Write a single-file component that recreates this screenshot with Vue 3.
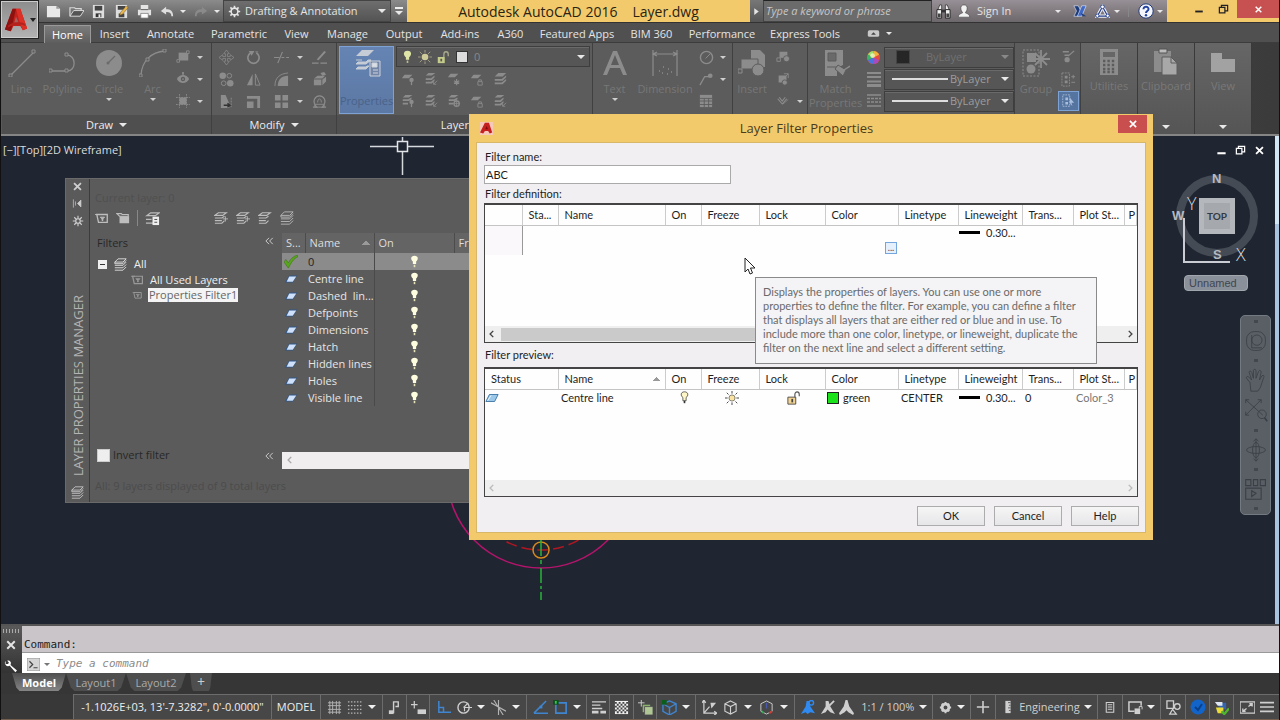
<script setup>
import { h, ref } from 'vue'

const g = 'fill="none" stroke="currentColor"'
const glyphs = {
  newFile: '<path d="M1 2h10l4 3v9H1z" fill="#e8e8e8"/><path d="M11 2v3h4z" fill="#999"/>',
  open: '<path d="M1 13V4h5l1 1h6v2" fill="none" stroke="#d8d8d8" stroke-width="1.3"/><path d="M1 13 5 7h11l-4 6z" fill="#555" stroke="#ddd"/>',
  save: '<path d="M2 1h12v14H2z" fill="#ddd"/><path d="M4 2h8v5H4z" fill="#444"/><path d="M5 10h6v4H5z" fill="#333"/><path d="M8 11h2v3H8z" fill="#eee"/>',
  saveAs: '<path d="M2 1h12v14H2z" fill="#ddd"/><path d="M4 2h8v4H4zM5 10h6v4H5z" fill="#444"/><path d="m6 12 1-3 6-7 2 2-6 7z" fill="#e8b64a" stroke="#6b5020" stroke-width=".5"/>',
  print: '<path d="M4 1h8v5H4zM1 6h14v6H1z" fill="#e4e4e4"/><path d="M4 6h8" stroke="#555"/><path d="M4 10h8v5H4z" fill="#fff" stroke="#777" stroke-width=".8"/>',
  undo: '<path d="M7 3 1 8l6 4V9c4 0 6 1 6 5h2c0-6-3-8-8-8z" fill="#dedede"/>',
  redo: '<path d="m9 3 6 5-6 4V9c-4 0-6 1-6 5H1c0-6 3-8 8-8z" fill="#8a8a8a"/>',
  gear: '<circle cx="8" cy="8" r="4.2" fill="none" stroke="currentColor" stroke-width="2"/><path d="M8 1v3M8 12v3M1 8h3M12 8h3M3 3l2 2M11 11l2 2M13 3l-2 2M5 11l-2 2" stroke="currentColor" stroke-width="2"/>',
  gearSolid: '<circle cx="8" cy="8" r="3.6" fill="none" stroke="currentColor" stroke-width="3"/><path d="M8 2v3M8 11v3M2 8h3M11 8h3M4 4l2 2M10 10l2 2M12 4l-2 2M6 10l-2 2" stroke="currentColor" stroke-width="2"/>',
  binoc: '<path d="M2 6 4 1h2v5M14 6l-2-5h-2v5" fill="#eee" stroke="#222" stroke-width=".7"/><path d="M1 6h5v9H1zM10 6h5v9h-5z" fill="#f2f2f2" stroke="#222"/><path d="M6 6h4v3H6z" fill="#333"/><path d="M2 10h3v4H2zM11 10h3v4h-3z" fill="#444"/>',
  user: '<path d="M8 1c3 0 4 2 3.500 5C11 8 10 9 9.500 10c1 1 5 1 5 5h-13c0-4 4-4 5-5C6 9 5 8 4.500 6 4 3 5 1 8 1z" fill="#f2f2f2" stroke="#333" stroke-width=".6"/>',
  exch: '<path d="M1 2h5l3 6-3 6H1l3-6z" fill="#1d3a7a" stroke="#e8eefc" stroke-width=".7"/><path d="M15 2h-5L5 14h5z" fill="#3f69c4" stroke="#e8eefc" stroke-width=".7"/><path d="M15 14h-4l-2-4z" fill="#1d3a7a"/>',
  a360: '<path d="M8 3 2.500 13h11z" fill="none" stroke="#f2f4fa" stroke-width="3.500"/><path d="M8 3 2.500 13h11z" fill="none" stroke="#27408b" stroke-width="1.300"/><circle cx="8" cy="3" r="2" fill="#fff" stroke="#27408b"/><circle cx="2.500" cy="12.500" r="1.800" fill="#fff" stroke="#27408b"/><circle cx="13.500" cy="12.500" r="1.800" fill="#fff" stroke="#27408b"/>',
  help: '<circle cx="8" cy="8" r="7.200" fill="#f4f6fc" stroke="#223a78"/><path d="M5.500 6.200c0-3.400 5.200-3.200 5 0C10.400 8 8 8 8 10" fill="none" stroke="#2343a0" stroke-width="2"/><circle cx="8" cy="12.300" r="1.200" fill="#2343a0"/>',
  tabIcon: '<rect x="1" y="4" width="14" height="8" rx="2" fill="#c8c8c8"/><path d="m5 9.500 3-3 3 3z" fill="#444"/>',
  logo: '<path d="M10 1h9l8 23-5 2-3-5h-8l-3 6-7-2z" fill="#c1211b"/><path d="M10 1h4L8 27l-7-2z" fill="#8d1210"/><path d="m14 10 3 7h-5z" fill="#a5605c"/><path d="M14 1h5l8 23-5 2-4-10z" fill="#dc2f26"/><path d="M5 20c7-4 14-4 19-2l1 3c-7-3-13-2-21 2z" fill="#b3231d"/>',
  logoSmall: '<path d="M0 0h16v16H0z" fill="#f6c9bb"/><path d="M6 1h5l4 12-3 1-2-3H6l-2 3-4-1z" fill="#c5201f"/><path d="m8 5 2 4H6.500z" fill="#7d0c0c"/>',

  line: `<path d="M3 26 26 3" ${g} stroke-width="1.300"/><path d="M1 25h3v3H1zM24 1h3v3h-3z" fill="#5c5c5c" stroke="currentColor"/>`,
  pline: `<path d="M2 22h16c10 0 9-16 0-16" ${g} stroke-width="1.300"/><path d="M0 20h3v3H0zM16 20h3v3h-3zM16 4h3v3h-3z" fill="#5c5c5c" stroke="currentColor"/>`,
  circle: '<circle cx="14" cy="14" r="13" fill="currentColor"/><path d="m13 14 7-7" stroke="#6b6b6b" stroke-width="1.200"/><circle cx="13" cy="14" r="1.500" fill="#6b6b6b"/>',
  arc: `<path d="M2 26C3 12 12 3 26 2" ${g} stroke-width="1.300"/><path d="M0 25h3v3H0zM7 9h3v3H7zM24 0h3v3h-3z" fill="#5c5c5c" stroke="currentColor"/>`,
  rect: '<path d="M3 3h11v9H3z" fill="currentColor"/><path d="M1 11h3v3H1zM12 1h3v3h-3z" fill="#5c5c5c" stroke="currentColor"/>',
  ellipse: '<path d="M1 8c3-6 11-6 14 0-3 6-11 6-14 0z" fill="currentColor"/><circle cx="8" cy="8" r="2.500" fill="#5c5c5c"/><circle cx="8" cy="8" r="1" fill="currentColor"/><path d="M7 0h2v3H7z" fill="currentColor"/>',
  hatch: `<path d="M4 4h8v8H4z" fill="currentColor"/><path d="M4 0v16M12 0v16M0 4h16M0 12h16" ${g} stroke-dasharray="2 1"/>`,
  move: '<path d="M8 0 5 4h2v3H4V5L0 8l4 3V9h3v3H5l3 4 3-4H9V9h3v2l4-3-4-3v2H9V4h2z" fill="#5c5c5c" stroke="currentColor" stroke-width=".8"/>',
  rotate: `<path d="M5 3a6 6 0 1 0 6 0" ${g} stroke-width="1.800"/><path d="m3 1 6 0-3 5z" fill="currentColor"/><path d="M10 2h3" ${g}/>`,
  trim: `<path d="M0 8h6M8 8h3M13 8h3" ${g} stroke-width="1.300"/><path d="m4 14 5-12" ${g} stroke-width="1.200"/>`,
  erase: `<path d="M0 14h7M9 14h7" ${g} stroke-width="1.400"/><path d="m5 10 8-9 2 1-8 9z" fill="currentColor"/>`,
  copy: '<circle cx="4" cy="4" r="3.500" fill="currentColor"/><circle cx="12" cy="12" r="3.500" fill="currentColor"/><circle cx="11" cy="4" r="2.500" fill="none" stroke="currentColor"/><circle cx="5" cy="12" r="2.500" fill="none" stroke="currentColor"/>',
  mirror: `<path d="M7 2v12H1z" fill="currentColor"/><path d="M10 2v12h5z" ${g}/>`,
  fillet: `<path d="M4 15C4 8 8 4 15 4v11z" fill="currentColor"/><path d="M1 15C1 6 6 2 15 1" ${g}/>`,
  explode: '<path d="m2 7 4-3h8l-3 3zM2 8h8v6H2zM11 8l4-3v5l-4 4z" fill="currentColor"/><path d="m9 1 4-1 2 3-4 1z" fill="currentColor"/>',
  stretch: '<path d="M2 1h5l4 9v5H2z" fill="currentColor"/><path d="M5 12h7m-3-2 3 2-3 2" fill="none" stroke="#333" stroke-width="1.400"/><path d="M13 4v10" stroke="currentColor" stroke-dasharray="2 1"/>',
  scale: `<path d="M1 8h7v7H1z" fill="currentColor"/><path d="M1 2h14v13h-3V5H1z" fill="currentColor"/>`,
  array: '<path d="M1 1h6v6H1zM9 1h6v6H9zM1 9h6v6H1zM9 9h6v6H9z" fill="currentColor"/>',
  offset: `<path d="M1 14h4c-6-7-1-12 3-12s9 5 3 12h4" ${g} stroke-width="1.300"/><path d="M3 11h10v3H3z" ${g}/><path d="M6 9c0-5 4-5 4 0" ${g}/>`,
  layerProps: '<path d="m9 1 12 0-6 6H3z" fill="#c6ccd6"/><path d="m3 11 6 0M3 15h10l5-4h-3l-2 2H5zM3 20h10l3-3h-2l-1 1H5z" fill="#c6ccd6" stroke="#c6ccd6"/><path d="M17 12h10v15H17z" fill="#7386a8" stroke="#ccd2dc"/><path d="M19 14h5v4h-5zM20 21h5M20 24h5" fill="#d9dde4" stroke="#ccd2dc"/>',
  bulb: '<path d="M8 1c6 0 5 6 2 8v3H6V9C3 7 2 1 8 1z" fill="#dfe5a6"/><path d="M7 13h2v3H7z" fill="#b9b98d"/>',
  sun: '<circle cx="8" cy="8" r="3.800" fill="#cfcb9a"/><path d="M8 0v3M8 13v3M0 8h3M13 8h3M2 2l2.500 2.500M11.500 11.500 14 14M14 2l-2.500 2.500M4.500 11.500 2 14" stroke="#aaa68a"/>',
  lock: '<path d="M2 8h8v7H2z" fill="#c5cb8a"/><path d="M9 8V5c0-4 5-4 5 0v2" fill="none" stroke="#aaa98c" stroke-width="1.500"/><path d="M5 10h2v3H5z" fill="#555"/>',
  lay1: '<path d="M4 3h9l-4 4H1z" fill="currentColor"/><circle cx="12" cy="9" r="2.500" fill="currentColor"/><path d="M12 11v4" stroke="currentColor" stroke-width="1.500"/>',
  lay2: '<path d="M5 1h8l-4 3H2zM2 7h6l4-3v2L9 9H2zM2 11h6l4-3v2l-3 3H2z" fill="currentColor"/><path d="m15 10-4 4m0-3v3h3" fill="none" stroke="currentColor"/>',
  lay3: '<path d="M4 2h9L9 6H1z" fill="currentColor"/><path d="M11 8v7M8 10l6 3M14 10l-6 3" stroke="currentColor" stroke-width="1.300"/>',
  lay4: '<path d="M4 3h9L9 7H1z" fill="currentColor"/><path d="M9 11h5v4H9zM10 11V9h3v2" fill="none" stroke="currentColor"/>',
  lay5: '<path d="M6 1h9l-4 4H2zM2 8h8l5-4v2l-4 4H2zM2 12h8l5-4v2l-4 4H2z" fill="currentColor"/>',
  lay6: '<path d="M5 1h8l-4 3H2zM2 6h6l4-2v2L9 8H2zM2 10h5v2H2z" fill="currentColor"/><circle cx="11" cy="11" r="3" fill="none" stroke="currentColor" stroke-width="1.500"/><path d="M11 7v8M7 11h8" stroke="currentColor"/>',
  lay7: '<path d="M5 1h8l-4 3H2zM2 6h6l4-2v2L9 8H2zM2 10h6v2H2z" fill="currentColor"/><circle cx="12" cy="9" r="2.500" fill="currentColor"/><path d="M12 11v4" stroke="currentColor" stroke-width="1.500"/>',
  textA: '<path d="M12 2h4l10 24h-4l-3-7H9l-3 7H2zm2 4-4 10h8z" fill="currentColor"/>',
  dim: `<path d="M2 1v26M26 1v26M2 5h24M6 3 2 5l4 2M22 3l4 2-4 2" ${g} stroke-width="1.200"/><path d="M8 22h1M12 18h1M17 20h1M20 23h1M11 24h1M16 25h1" stroke="currentColor" stroke-width="1.500"/>`,
  dimSmall: `<circle cx="8" cy="8" r="6.500" ${g} stroke-width="1.500"/><path d="m7 9 5-5" ${g}/>`,
  leader: `<path d="m1 14 5-9h5" ${g} stroke-width="1.300"/><circle cx="12" cy="4" r="2.500" fill="currentColor"/>`,
  table: '<path d="M1 1h14v14H1z" fill="currentColor"/><path d="M1 5h14M1 8h14M1 12h14M6 5v10M11 5v10" stroke="#5c5c5c"/>',
  insert: '<path d="M13 1h9l5 5v12H13z" fill="currentColor"/><path d="M3 10h17v10H3z" fill="currentColor" stroke="#5c5c5c"/><circle cx="20" cy="21" r="6" fill="currentColor" stroke="#5c5c5c"/><path d="M0 20h4v4H0z" fill="#5c5c5c" stroke="currentColor"/>',
  block1: '<path d="M4 2h9v7H4z" fill="currentColor"/><circle cx="12" cy="10" r="3.500" fill="currentColor" stroke="#5c5c5c"/><path d="M1 9h4v4H1z" fill="none" stroke="currentColor"/>',
  block2: '<path d="M3 4h9v8H3z" fill="currentColor"/><path d="m9 7 5-5m0 5V2H9" fill="none" stroke="currentColor"/><circle cx="10" cy="12" r="3" fill="currentColor" stroke="#5c5c5c"/>',
  block3: `<path d="m1 5 6 7 6-7M3 3l4 5 4-5" ${g} stroke-width="1.500"/><path d="m8 12 7-6" ${g}/>`,
  match: '<path d="M3 1h18v15l-6 3v8H3z" fill="currentColor"/><path d="M6 4h8v8H6zM5 18h11" fill="#6a6a6a" stroke="#5c5c5c"/><path d="m13 20 3-4 8 5-3 6z" fill="currentColor" stroke="#5c5c5c"/><path d="m22 21 6-4" stroke="currentColor" stroke-width="1.500"/>',
  wheel: '<circle cx="8" cy="8" r="7" fill="#e34b3f"/><path d="M8 8V1a7 7 0 0 1 6 4z" fill="#efb53a"/><path d="M8 8 2 5a7 7 0 0 1 6-4z" fill="#9be06a"/><path d="M8 8 2 5a7 7 0 0 0 0 6z" fill="#38b765"/><path d="m8 8-6 3a7 7 0 0 0 6 4z" fill="#4a75dc"/><path d="M8 8v7a7 7 0 0 0 6-4z" fill="#a64bc0"/><circle cx="7" cy="6" r="2.500" fill="#f6f2c8" opacity=".8"/>',
  weights: '<path d="M1 2h14M1 6h14M1 10.500h14" stroke="currentColor" stroke-width="2"/><path d="M1 14.500h14" stroke="currentColor" stroke-width="3"/>',
  types: '<path d="M1 2h14M1 13h14" stroke="currentColor" stroke-width="1.500"/><path d="M1 5.500h14M1 9h14" stroke="currentColor" stroke-width="1.500" stroke-dasharray="3 1"/>',
  group: `<path d="M1 1h16v26H1z" ${g} stroke-dasharray="2 1.500"/><path d="M5 4h9v9H5z" fill="currentColor"/><circle cx="9" cy="20" r="4.500" fill="currentColor"/><path d="M19 1v18M10 10h18M13 4l12 12M25 4 13 16" stroke="currentColor" stroke-width="1.800"/>`,
  grp1: '<path d="M2 2h7M4 6h5" stroke="currentColor" stroke-width="1.500"/><circle cx="7" cy="11" r="3" fill="currentColor"/><path d="m8 7 7-6" stroke="currentColor" stroke-width="1.500"/>',
  grp2: `<path d="M1 1h8v14H1z" ${g} stroke-dasharray="2 1"/><path d="M4 4h3v3H4zM4 9h3v3H4z" fill="currentColor"/><path d="M11 5h4M13 3v4M11 11h4" ${g}/>`,
  grp3: '<path d="M2 1h8v13H2z" fill="none" stroke="#a9bedd" stroke-dasharray="2 1"/><path d="M5 4h3v3H5zM5 9h3v3H5z" fill="#a9bedd"/><path d="m10 4 5 6h-3l1 4-3-4z" fill="#a9bedd"/>',
  calc: '<path d="M5 1h18v26H5z" fill="currentColor"/><path d="M8 4h12v5H8z" fill="#666"/><path d="M8 13h12M8 17h12M8 21h12M8 24h12" stroke="#5c5c5c" stroke-width="2.500" stroke-dasharray="2.400 2"/>',
  clip: '<path d="M2 3h17v21H2z" fill="currentColor"/><path d="M7 1h8v4H7z" fill="#bbb" stroke="#555"/><path d="M10 9h9l6 6v12H10z" fill="#a8a8a8" stroke="#5c5c5c"/><path d="M19 9v6h6" fill="none" stroke="#5c5c5c"/>',
  view: '<path d="M2 5h11v6h13v13H2z" fill="#a2a2a2"/>',

  pin: '<path d="M2 2v12M5 5v6M8 8l5-5v10z" fill="currentColor" stroke="currentColor"/>',
  pCog: '<circle cx="8" cy="8" r="3" fill="none" stroke="currentColor" stroke-width="1.500"/><path d="M8 1v4M8 11v4M1 8h4M11 8h4M3 3l3 3M10 10l3 3M13 3l-3 3M6 10l-3 3" stroke="currentColor" stroke-width="1.500"/>',
  stack: '<path d="M5 1h10l-4 4H1zM1 5v2h10l4-4M1 9h10l4-4M1 12h10l4-4M1 15h10l4-4" fill="none" stroke="currentColor"/>',
  folderF: '<path d="M2 4h12v9H4z" fill="none" stroke="currentColor" stroke-width="1.500"/><path d="M0 4h5M6 7h5l-2 2v2h-1v-2z" fill="currentColor" stroke="currentColor"/>',
  folder: '<path d="M1 3h5l1 1h7v2H4z" fill="none" stroke="currentColor" stroke-width="1.300"/><path d="M4 6h11v8H4z" fill="currentColor"/>',
  stateMgr: '<path d="M6 2h9l-4 3H2zM1 9h6M1 13h8" fill="none" stroke="currentColor" stroke-width="1.300"/><path d="M8 6h7v9H8z" fill="#eee"/><path d="M10 9h3M10 12h3" stroke="#444"/>',
  newLay: '<path d="M5 2h9l-4 3H1zM1 8h8l3-2M1 11h8M1 14h8l3-3" fill="none" stroke="currentColor" stroke-width="1.300"/><path d="M13 6v6M10 9h6" stroke="currentColor"/>',
  delLay: '<path d="M5 2h9l-4 3H1zM1 8h8l3-2M1 11h8M1 14h8l3-3" fill="none" stroke="currentColor" stroke-width="1.300"/>',
  para: '<path d="M6 4h9l-5 8H1z" fill="#2f5688"/><path d="M6 5h8l-4 6H3z" fill="#cfe0fa"/>',
  paraBlue: '<path d="M5 4h10l-4 8H1z" fill="#9cc8ea" stroke="#39709f"/><path d="m7 5-4 6" stroke="#fff"/>',
  lamp: '<path d="M8 1c5 0 5 5 2 7v3H6V8C3 6 3 1 8 1z" fill="#fffde0"/><path d="M7 12h2v3H7z" fill="#e6e3b8"/>',
  check: '<path d="m0 8 5 7C8 9 11 4 16 2l-1-2C10 2 7 5 5 9L2 5z" fill="#57a61c" stroke="#37700f" stroke-width=".6"/>',
  dLamp: '<path d="M8 1c5 0 5 5 2 7v4H6V8C3 6 3 1 8 1z" fill="#fff6c8" stroke="#333" stroke-width=".9"/><path d="M7 12h2v3H7z" fill="#333"/>',
  dSun: '<circle cx="8" cy="8" r="3.500" fill="#fbe3a2" stroke="#555" stroke-width=".8"/><path d="M8 0v3M8 13v3M0 8h3M13 8h3M2 2l2 2M12 12l2 2M14 2l-2 2M4 12l-2 2" stroke="#444" stroke-width="1.100"/>',
  dLock: '<path d="M1 7h9v8H1z" fill="#f4d495" stroke="#444"/><path d="M9 7V4c0-4 5-4 5 0v2" fill="none" stroke="#555" stroke-width="1.300"/><path d="M5 9h2v4H5z" fill="#444"/>',

  navWheel: `<rect x="3" y="3" width="22" height="22" rx="9" ${g}/><circle cx="15" cy="13" r="6" ${g}/><path d="M9 7v15h12" ${g}/>`,
  hand: `<path d="M7 17 3 12c-1-2 2-3 3-1l3 3-3-9c0-2 2-2 3 0l2 7V3c0-2 3-2 3 0v9l3-8c1-2 3-1 3 1l-2 9 3-5c2-1 3 0 2 2l-4 12-3 4h-8z" ${g}/>`,
  zoomX: `<path d="m2 2 20 18M20 2 2 20M2 6V2h4M16 2h4v4M2 16v4h4" ${g}/><circle cx="21" cy="19" r="5" ${g}/><path d="m24 23 3 4" ${g} stroke-width="2"/>`,
  orbit: `<path d="M14 1v26M11 4l3-3 3 3M11 24l3 3 3-3" ${g}/><ellipse cx="14" cy="14" rx="11" ry="4" ${g}/><ellipse cx="14" cy="14" rx="4" ry="9" ${g}/>`,
  motion: `<path d="M2 3h6v7H2zM11 3h5v7h-5zM19 3h6v7h-6zM2 13h18v13H2zM9 16l5 3-5 4z" ${g} stroke-width="1.300"/>`,
  wrench: '<path d="M2 1a4 4 0 0 0 5 6l7 8 2-2-8-7c2-4-2-6-4-5l2 2-1 2-3 0z" fill="#fff"/>',
  prompt: '<path d="M0 0h16v16H0z" fill="#d5d5d5" stroke="#888"/><path d="m3 4 4 4-4 4M8 12h5" fill="none" stroke="#444" stroke-width="1.500"/>',

  grid: '<path d="M3 1v14M6 1v14M10 1v14M13 1v14M1 3h14M1 6h14M1 10h14M1 13h14" stroke="currentColor" opacity=".8"/>',
  dots: '<path d="M1 2h15M1 6h15M1 10h15M1 14h15" stroke="currentColor" stroke-width="1.300" stroke-dasharray="1.600 1.600" opacity=".8"/>',
  infer: `<path d="M7 14V2h5v5H9" ${g} stroke-width="1.500"/><path d="M2 11h5v4H2z" fill="currentColor"/>`,
  dyn: '<path d="M0 5h7M3.500 1v8" stroke="currentColor" stroke-width="1.300"/><path d="M7 10h9v5H7z" fill="currentColor"/>',
  ortho: '<path d="M3 1v12h13M3 8h5v5" fill="none" stroke="#3f85d0" stroke-width="1.600"/>',
  polar: `<circle cx="7" cy="8" r="6" ${g} stroke-width="1.500"/><path d="M7 8h9M7 8l5-5M7 8h1v4" ${g} stroke-width="1.200"/>`,
  iso: `<path d="M3 0 13 16M8 0v16M0 3l16 9" ${g} stroke-width="1.200" opacity=".8"/>`,
  otrack: '<path d="M1 14h15M1 14 14 1" fill="none" stroke="#3f85d0" stroke-width="1.600"/><path d="M7 6h3v3H7z" fill="#3f85d0"/>',
  osnap: '<path d="M3 3h11v11H3z" fill="none" stroke="#3f85d0" stroke-width="1.800"/><path d="M0 0h6v5H0z" fill="#0c4f1c"/><path d="M2 1h2v3H2z" fill="#3bc24b"/>',
  lwt: '<path d="M1 2h15M1 5.500h9M1 9h11" stroke="currentColor" stroke-width="1.500"/><path d="M1 13h7M10 13h6" stroke="currentColor" stroke-width="3"/>',
  transp: '<path d="M1 1h14v14H1z" fill="#f0f0f0"/><path d="M1 3h14M1 7h14M1 11h14M3 5h12M3 9h12M3 13h12" stroke="#444" stroke-width="2" stroke-dasharray="2 2"/>',
  selCyc: '<path d="M0 3h7M3.500 0v7" stroke="currentColor"/><path d="M5 5h8v8H5z" fill="#8ab36d"/><path d="M7 7h9v9H7z" fill="#b0c795" stroke="#555"/>',
  cube3: '<path d="m8 1 7 3v8l-7 4-7-4V4zM1 4l7 4 7-4M8 8v8" fill="none" stroke="#3f85d0" stroke-width="1.500"/><path d="M0 0h5v5H0z" fill="#0c5c1c"/>',
  ducs: `<path d="M2 1v13h13M2 14 8 7M0 3l2-3 2 3M13 12l3 2-3 2" ${g} stroke-width="1.300"/><path d="M9 3h6l-5 6z" fill="currentColor"/>`,
  cube: `<path d="m8 1 6 3v8l-6 3-6-3V4zM2 4l6 3 6-3M8 7v8" ${g} stroke-width="1.200"/>`,
  gizmo: `<path d="m8 1 6 3v8l-6 3-6-3V4z" ${g}/><path d="M8 3v6" stroke="#4a58b0" stroke-width="1.500"/><path d="m3 12 2 2" stroke="#3aa75a" stroke-width="2"/><path d="m11 14 3-2" stroke="#d43a32" stroke-width="2"/>`,
  annoBlue: '<path d="M7 1h3l1 6 5 7-5-1-3 2-2-2-5 2 5-8z" fill="#2f8af2"/><circle cx="12" cy="3" r="2.500" fill="none" stroke="#2f8af2" stroke-width="1.500"/>',
  anno: '<path d="M6 1h3l2 6 5 8-5-2-3-3-2 3-5 2 5-8z" fill="currentColor"/><path d="m10 6 5-5" stroke="currentColor" stroke-width="2"/>',
  annoPlain: '<path d="M7 0h2l2 7 5 7-1 2-5-3-2-2-2 2-5 3-1-2 5-7z" fill="currentColor"/>',
  ruler: '<path d="M5 1h6v14H5z" fill="currentColor"/><path d="M8 3h3M9 6h2M8 9h3M9 12h2" stroke="#555"/>',
  pad: `<path d="M3 2h10v13H3z" ${g} stroke-width="1.400"/><path d="M5 5h6M5 8h6M5 11h6" ${g} stroke-width="1.400"/>`,
  lockUi: `<path d="M7 12H1V2h13v4" ${g} stroke-width="1.600"/><path d="M7 9h6v6H7z" fill="currentColor"/><path d="M12 9V7h3v3" ${g}/>`,
  isolate: `<path d="M1 1h7v8H1z" ${g} stroke-width="1.400"/><circle cx="12" cy="7" r="3" ${g} stroke-width="1.400"/><path d="m7 10 4 5H4z" ${g} stroke-width="1.300"/>`,
  hw: '<circle cx="8" cy="8" r="7.500" fill="#1264c8"/><path d="m5 8 3 3 4-6" fill="none" stroke="#0a3f8a" stroke-width="2"/>',
  trusted: '<path d="M5 3h8v7H5z" fill="#3566ad"/><path d="M1 2h8v4H4z" fill="#dfe8f2"/><path d="M2 8h8v6H4z" fill="#eadb37"/><path d="m8 12 3 3 5-6" fill="none" stroke="#4fb52c" stroke-width="2.500"/>',
  clean: `<path d="M0 2h16v12H0z" ${g} stroke-width="1.500"/><path d="m9 7 4-3M10 4h3v3M7 9l-4 3M3 9v3h3" ${g} stroke-width="1.400"/>`,
  burger: '<path d="M0 3h16M0 8h16M0 13h16" stroke="currentColor" stroke-width="1.800"/>',
  plus: '<path d="M8 1v14M1 8h14" stroke="currentColor" stroke-width="1.800"/>',
  close: '<path d="m3 3 10 10M13 3 3 13" stroke="currentColor" stroke-width="2.600"/>',
  min: '<path d="M2 12h12" stroke="currentColor" stroke-width="3"/>',
  restore: `<path d="M2 5h8v8H2zM5 5V2h9v8h-4" ${g} stroke-width="1.800"/>`,
  play: '<path d="m4 2 8 6-8 6z" fill="currentColor"/>',
  dbl: `<path d="M8 3 3 8l5 5M14 3 9 8l5 5" ${g} stroke-width="1.500"/>`,
  left: `<path d="m10 3-5 5 5 5" ${g} stroke-width="2.200"/>`,
  right: `<path d="m6 3 5 5-5 5" ${g} stroke-width="2.200"/>`
}
const big = ['logo', 'line', 'pline', 'circle', 'arc', 'layerProps', 'textA', 'dim', 'insert', 'match', 'group', 'calc', 'clip', 'view', 'navWheel', 'hand', 'zoomX', 'orbit', 'motion']
const Ic = (p) => h('svg', {
  width: p.s || 14, height: p.s || 14,
  viewBox: big.includes(p.n) ? '0 0 28 28' : '0 0 16 16',
  'aria-hidden': 'true', innerHTML: glyphs[p.n]
})
Ic.props = ['n', 's']

const tabs = ['Home', 'Insert', 'Annotate', 'Parametric', 'View', 'Manage', 'Output', 'Add-ins', 'A360', 'Featured Apps', 'BIM 360', 'Performance', 'Express Tools']
const drawTools = [['Line', 'line'], ['Polyline', 'pline'], ['Circle', 'circle'], ['Arc', 'arc']]
const modifyTools = ['move', 'rotate', 'trim', '', 'erase', 'copy', 'mirror', 'fillet', '', 'explode', 'stretch', 'scale', 'array', '', 'offset']
const layerTools = ['lay1', 'lay2', 'lay3', 'lay4', 'lay5', 'lay7', 'lay2', 'lay6', 'lay4', 'lay2']
const layers = ['0', 'Centre line', 'Dashed  lin...', 'Defpoints', 'Dimensions', 'Hatch', 'Hidden lines', 'Holes', 'Visible line']
const status = [
  [['grid', 'dots', '▾'], 62], [['infer'], 24], [['dyn'], 23],
  [['ortho', 'polar', '▾', 'iso', '▾'], 97], [['otrack', 'osnap', '▾'], 60], [['lwt'], 23], [['transp'], 24], [['selCyc'], 23],
  [['cube3', '▾'], 39], [['ducs', 'cube', '▾', 'gizmo', '▾'], 99]
]
const filterName = ref('ABC')
const inverted = ref(false)
</script>

<template>
  <div class="app">
    <button class="appmenu" aria-label="Application menu"><Ic n="logo" :s="24" /><i class="caret dark"></i></button>

    <header class="titlebar">
      <div class="qat">
        <button v-for="n in ['newFile', 'open', 'save', 'saveAs', 'print']" :key="n" class="q" :aria-label="n"><Ic :n="n" :s="15" /></button>
        <button class="q" aria-label="Undo"><Ic n="undo" /></button><i class="caret sm"></i>
        <button class="q" aria-label="Redo"><Ic n="redo" /></button><i class="caret sm"></i>
      </div>
      <label class="workspace"><Ic n="gear" :s="13" />
        <select aria-label="Workspace"><option>Drafting &amp; Annotation</option></select><i class="caret"></i>
      </label>
      <button class="qmore" aria-label="Customize"><i class="bar"></i><i class="caret"></i></button>
      <h1 class="doc"><span>Autodesk AutoCAD 2016</span><span>Layer.dwg</span></h1>
      <button class="sarrow" aria-label="Collapse search"><Ic n="play" :s="9" /></button>
      <input class="search" type="search" placeholder="Type a keyword or phrase" aria-label="Search">
      <div class="info">
        <button aria-label="Find"><Ic n="binoc" :s="15" /></button>
        <button class="sign"><Ic n="user" :s="14" />Sign In</button>
        <i class="caret sm"></i>
        <button aria-label="Exchange"><Ic n="exch" /></button>
        <button aria-label="A360"><Ic n="a360" :s="15" /></button>
        <i class="caret sm"></i><i class="vsep"></i>
        <button aria-label="Help"><Ic n="help" :s="16" /></button>
        <i class="caret sm"></i>
      </div>
      <div class="winbtns">
        <button aria-label="Minimize"><Ic n="min" :s="10" /></button>
        <button aria-label="Restore"><Ic n="restore" :s="11" /></button>
        <button class="x" aria-label="Close"><Ic n="close" :s="9" /></button>
      </div>
    </header>

    <nav class="tabs">
      <button v-for="(t, i) in tabs" :key="t" :class="{ on: i === 0 }">{{ t }}</button>
      <span class="tabend"><Ic n="tabIcon" :s="13" /><i class="caret sm"></i></span>
    </nav>

    <section class="ribbon">
      <div class="panel">
        <div class="pbody draw">
          <button v-for="(d, i) in drawTools" :key="d[0]" class="bigb"><Ic :n="d[1]" :s="28" /><span>{{ d[0] }}</span><i v-if="i > 1" class="caret sm"></i></button>
          <div class="minis two">
            <template v-for="n in ['rect', 'ellipse', 'hatch']" :key="n"><Ic :n="n" /><i class="caret sm"></i></template>
          </div>
        </div>
        <div class="ptitle">Draw <i class="caret"></i></div>
      </div>
      <div class="panel">
        <div class="pbody"><div class="minis mod">
          <template v-for="(n, i) in modifyTools" :key="i"><Ic v-if="n" :n="n" :s="15" /><i v-else class="caret sm"></i></template>
        </div></div>
        <div class="ptitle">Modify <i class="caret"></i></div>
      </div>
      <div class="panel">
        <div class="pbody lay">
          <button class="bigb sel"><Ic n="layerProps" :s="28" /><span>Properties</span></button>
          <div class="laycol">
            <label class="combo"><Ic n="bulb" :s="13" /><Ic n="sun" :s="14" /><Ic n="lock" /><i class="swatch"></i>
              <select aria-label="Layer"><option>0</option></select><i class="caret"></i></label>
            <div class="minis lays"><Ic v-for="(n, i) in layerTools" :key="i" :n="n" /></div>
          </div>
        </div>
        <div class="ptitle">Layers <i class="caret"></i></div>
      </div>
      <div class="panel">
        <div class="pbody anno">
          <button class="bigb"><Ic n="textA" :s="28" /><span>Text</span><i class="caret sm"></i></button>
          <button class="bigb"><Ic n="dim" :s="28" /><span>Dimension</span></button>
          <div class="minis two"><Ic n="dimSmall" :s="15" /><i class="caret sm"></i><Ic n="leader" :s="15" /><i class="caret sm"></i><Ic n="table" /></div>
        </div>
        <div class="ptitle"></div>
      </div>
      <div class="panel">
        <div class="pbody block">
          <button class="bigb"><Ic n="insert" :s="28" /><span>Insert</span></button>
          <div class="minis two"><Ic n="block1" /><i></i><Ic n="block2" /><i></i><Ic n="block3" :s="12" /><i class="caret sm"></i></div>
        </div>
        <div class="ptitle"></div>
      </div>
      <div class="panel">
        <div class="pbody props">
          <button class="bigb"><Ic n="match" :s="28" /><span>Match<br>Properties</span></button>
          <div class="pgrid">
            <Ic n="wheel" :s="15" /><label class="combo dim"><i class="black"></i><select aria-label="Colour"><option>ByLayer</option></select><i class="caret"></i></label>
            <Ic n="weights" :s="16" /><label class="combo"><i class="ln"></i><select aria-label="Lineweight"><option>ByLayer</option></select><i class="caret"></i></label>
            <Ic n="types" :s="16" /><label class="combo"><i class="ln"></i><select aria-label="Linetype"><option>ByLayer</option></select><i class="caret"></i></label>
          </div>
        </div>
        <div class="ptitle"></div>
      </div>
      <div class="panel">
        <div class="pbody grp">
          <button class="bigb"><Ic n="group" :s="28" /><span>Group</span></button>
          <div class="minis one"><Ic n="grp1" /><Ic n="grp2" :s="15" /><span class="blue"><Ic n="grp3" /></span></div>
        </div>
        <div class="ptitle"></div>
      </div>
      <button v-for="p in [['Utilities', 'calc'], ['Clipboard', 'clip'], ['View', 'view']]" :key="p[0]" class="single"><Ic :n="p[1]" :s="28" /><span>{{ p[0] }}</span><i class="caret"></i></button>
    </section>

    <main class="canvas">
      <div class="viewctl">[−][Top][2D Wireframe]</div>
      <svg class="cross" width="66" height="40" viewBox="0 0 66 40"><path d="M1 10.500h27M38 10.500h27M33.500 1v4M33.500 15v24" stroke="#d5d8dd" stroke-width="1.500" /><path d="M28.500 5.500h10v10h-10z" fill="none" stroke="#e3e5e9" stroke-width="1.500" /></svg>
      <svg class="drawing" width="200" height="240" viewBox="0 0 200 240" fill="none">
        <circle cx="100" cy="110" r="94" stroke="#b4146c" stroke-width="1.500" />
        <circle cx="100" cy="110" r="76" stroke="#b01722" stroke-width="1.500" stroke-dasharray="11 5" />
        <circle cx="100" cy="186" r="8" stroke="#d98a1c" stroke-width="1.500" />
        <path d="M100 176v16M100 196v4M100 204v15M100 222v3M100 228v8" stroke="#27b53a" stroke-width="1.500" />
      </svg>
      <div class="vpbtns"><button aria-label="Minimize view"><Ic n="min" :s="11" /></button><button aria-label="Restore view"><Ic n="restore" :s="11" /></button><button aria-label="Close view"><Ic n="close" :s="11" /></button></div>
      <div class="cube">
        <b class="n">N</b><b class="w">W</b><b class="e">E</b><b class="s">S</b>
        <button>TOP</button>
        <div class="ucs"><span class="uy">Y</span><span class="ux">X</span></div>
      </div>
      <select class="ucsname" aria-label="UCS"><option>Unnamed</option></select>
      <div class="navbar">
        <i class="dot"></i><Ic n="navWheel" :s="24" /><i class="dot"></i><Ic n="hand" :s="24" /><Ic n="zoomX" :s="24" /><i class="dot"></i><Ic n="orbit" :s="24" /><i class="dot"></i><Ic n="motion" :s="24" /><i class="dot"></i>
      </div>

      <aside class="palette">
        <div class="strip">
          <Ic n="close" :s="11" /><Ic n="pin" :s="11" /><Ic n="pCog" :s="12" />
          <span class="vname">LAYER PROPERTIES MANAGER</span><Ic n="stack" :s="13" />
        </div>
        <div class="pal">
          <div class="cur">Current layer: 0</div>
          <div class="ptools">
            <Ic n="folderF" /><Ic n="folder" /><i class="psep"></i><Ic n="stateMgr" :s="15" />
            <span class="lt"><Ic n="newLay" /><Ic n="newLay" /><Ic n="delLay" /><Ic n="stack" /></span>
          </div>
          <div class="split">
            <div class="filters">
              <div class="fh">Filters<Ic n="dbl" :s="10" /></div>
              <ul class="tree">
                <li class="root"><i class="minus"></i><Ic n="stack" :s="13" />All</li>
                <li class="kid"><Ic n="folderF" :s="13" />All Used Layers</li>
                <li class="kid"><Ic n="folderF" :s="10" /><mark>Properties Filter1</mark></li>
              </ul>
              <div class="inv"><label><input v-model="inverted" type="checkbox">Invert filter</label><Ic n="dbl" :s="10" /></div>
            </div>
            <div class="layers">
              <table>
                <colgroup><col class="c1"><col class="c2"><col class="c3"><col></colgroup>
                <thead><tr><th>S...</th><th class="srt">Name</th><th>On</th><th>Fr</th></tr></thead>
                <tbody><tr v-for="(l, i) in layers" :key="l" :class="{ cur0: i === 0 }">
                  <td><Ic :n="i ? 'para' : 'check'" /></td><td>{{ l }}</td><td class="lampc"><Ic n="lamp" :s="13" /></td><td></td>
                </tr></tbody>
              </table>
              <div class="lscroll"><Ic n="left" :s="10" /></div>
            </div>
          </div>
          <div class="foot">All: 9 layers displayed of 9 total layers</div>
        </div>
      </aside>

      <form class="dialog" role="dialog" aria-labelledby="dt" @submit.prevent>
        <div class="dtitle"><Ic n="logoSmall" :s="13" /><h2 id="dt">Layer Filter Properties</h2><button type="button" class="dx" aria-label="Close"><Ic n="close" :s="10" /></button></div>
        <div class="client">
          <label class="l1" for="fn">Filter name:</label>
          <input id="fn" v-model="filterName" type="text">
          <div class="l2">Filter definition:</div>
          <div class="box def">
            <table>
              <colgroup><col class="a"><col class="b"><col class="c"><col class="d"><col class="e"><col class="f"><col class="g"><col class="h"><col class="i"><col class="j"><col class="k"><col></colgroup>
              <thead><tr><th></th><th>Sta...</th><th>Name</th><th>On</th><th>Freeze</th><th>Lock</th><th>Color</th><th>Linetype</th><th>Lineweight</th><th>Trans...</th><th>Plot St...</th><th>P</th></tr></thead>
              <tbody>
                <tr><td class="rowh"></td><td colspan="7"></td><td class="lw"><i></i>0.30...</td><td colspan="3"></td></tr>
                <tr><td class="rowh"></td><td colspan="5"></td><td class="pick"><button type="button" aria-label="Select color">...</button></td><td colspan="5"></td></tr>
              </tbody>
            </table>
            <div class="sb"><Ic n="left" :s="10" /><i class="thumb"></i><Ic n="right" :s="10" /></div>
          </div>
          <div class="l3">Filter preview:</div>
          <div class="box prev">
            <table>
              <colgroup><col class="ab"><col class="c"><col class="d"><col class="e"><col class="f"><col class="g"><col class="h"><col class="i"><col class="j"><col class="k"><col></colgroup>
              <thead><tr><th>Status</th><th class="srt">Name</th><th>On</th><th>Freeze</th><th>Lock</th><th>Color</th><th>Linetype</th><th>Lineweight</th><th>Trans...</th><th>Plot St...</th><th>P</th></tr></thead>
              <tbody><tr>
                <td class="st"><Ic n="paraBlue" /></td><td>Centre line</td><td class="mid"><Ic n="dLamp" :s="13" /></td><td class="mid"><Ic n="dSun" /></td><td class="mid"><Ic n="dLock" /></td>
                <td class="col"><i></i>green</td><td>CENTER</td><td class="lw"><i></i>0.30...</td><td>0</td><td class="grey">Color_3</td><td></td>
              </tr></tbody>
            </table>
            <div class="sb off"><Ic n="left" :s="10" /><Ic n="right" :s="10" /></div>
          </div>
          <div class="btns"><button>OK</button><button type="button">Cancel</button><button type="button">Help</button></div>
        </div>
      </form>

      <div class="tip" role="tooltip">
        <span>Displays the properties of layers. You can use one or more</span>
        <span>properties to define the filter. For example, you can define a filter</span>
        <span>that displays all layers that are either red or blue and in use. To</span>
        <span>include more than one color, linetype, or lineweight, duplicate the</span>
        <span>filter on the next line and select a different setting.</span>
      </div>
      <svg class="mouse" width="12" height="19" viewBox="0 0 12 19"><path d="M1 1v14l3-3 2 5 2.500-1-2-5H11z" fill="#fff" stroke="#222" /></svg>
    </main>

    <section class="cmd">
      <div class="cleft"><i class="grip"></i><Ic n="close" :s="12" /><Ic n="wrench" :s="13" /></div>
      <div class="cright">
        <div class="hist">Command:</div>
        <label class="cin"><Ic n="prompt" :s="13" /><i class="caret sm grey"></i><input type="text" placeholder="Type a command" aria-label="Command"></label>
      </div>
    </section>
    <nav class="layouts"><button class="on">Model</button><button>Layout1</button><button>Layout2</button><button class="add" aria-label="New layout">+</button></nav>
    <footer class="status">
      <span class="seg coords">-1.1026E+03, 13'-7.3282", 0'-0.0000"</span>
      <button class="seg model">MODEL</button>
      <div v-for="(s, i) in status" :key="i" class="seg" :style="{ width: s[1] + 'px' }">
        <template v-for="(n, j) in s[0]" :key="j"><i v-if="n === '▾'" class="caret"></i><Ic v-else :n="n" :s="15" /></template>
      </div>
      <div class="seg an"><Ic n="annoBlue" :s="15" /><Ic n="anno" :s="15" /><Ic n="annoPlain" :s="15" /><span class="gap">1:1 / 100%</span><i class="caret"></i></div>
      <div class="seg w38"><Ic n="gearSolid" :s="15" /><i class="caret"></i></div>
      <div class="seg w25"><Ic n="plus" :s="14" /></div>
      <div class="seg eng"><Ic n="ruler" :s="14" /><span>Engineering</span><i class="caret"></i></div>
      <div class="seg w25"><Ic n="pad" :s="12" /></div>
      <div class="seg w38"><Ic n="lockUi" :s="15" /><i class="caret"></i></div>
      <div class="seg w25"><Ic n="isolate" :s="15" /></div>
      <div class="seg w24"><Ic n="hw" :s="16" /></div>
      <div class="seg w24"><Ic n="trusted" :s="15" /></div>
      <div class="seg last"><Ic n="clean" :s="15" /><Ic n="burger" :s="14" /></div>
    </footer>
  </div>
</template>

<style>
html, body { background: #000; }
</style>

<style scoped>
* { box-sizing: border-box; }
.app { position: relative; display: flex; flex-direction: column; min-height: 100vh; padding: 0 1px; overflow: hidden; font: 11px/14px "Open Sans", "Noto Sans", sans-serif; color: #e4e4e4; background: #111; }
button, select, input { font: inherit; color: inherit; background: none; border: 0; padding: 0; margin: 0; border-radius: 0; }
select { appearance: none; outline: 0; }
svg { display: block; flex: none; }
h1, h2, ul { margin: 0; padding: 0; font-weight: 400; list-style: none; }
.caret { flex: none; width: 0; height: 0; border: 4px solid transparent; border-top-color: #e8e8e8; border-bottom: 0; }
.caret.sm { border-width: 3px 3px 0; }
.caret.dark { border-top-color: #222; border-width: 4px 3px 0; }
.caret.grey { border-top-color: #777; }

.appmenu { position: absolute; z-index: 3; left: 1px; top: 1px; width: 37px; height: 37px; display: flex; align-items: center; padding-left: 2px; gap: 2px; background: linear-gradient(#8d8d8d, #b2b2b2); border: 1px solid #ccc; box-shadow: 0 0 0 1px #222; }

.titlebar { display: flex; height: 23px; align-items: stretch; background: linear-gradient(#8b8b8b, #5c5c5c); border-bottom: 1px solid #333; }
.qat { width: 222px; padding-left: 41px; display: flex; align-items: center; }
.q { width: 23px; display: flex; justify-content: center; }
.qat .caret { margin: 0 3px 0 2px; }
.workspace { width: 168px; display: flex; align-items: center; gap: 4px; padding: 0 4px; border: 1px solid #444; background: linear-gradient(#6e6e6e, #545454); }
.workspace select { flex: 1; width: 0; }
.qmore { width: 16px; display: flex; flex-direction: column; align-items: center; justify-content: center; gap: 2px; }
.qmore .bar { width: 8px; height: 2px; background: #eee; }
.doc { flex: 1; display: flex; justify-content: center; gap: 15px; background: #f2ca6c; color: #2b2312; font-size: 14px; line-height: 24px; }
.sarrow { width: 13px; display: flex; align-items: center; justify-content: center; background: linear-gradient(#777, #555); }
.search { width: 169px; padding: 0 2px; background: #6b6b6b; border: 1px solid #444; border-top-color: #222; font-style: italic; }
.search::placeholder { color: #c6c6c6; opacity: 1; }
.info { width: 235px; display: flex; align-items: center; background: linear-gradient(#979096, #6c676b); }
.info button { width: 23px; display: flex; justify-content: center; align-items: center; }
.info .sign { width: 92px; justify-content: flex-start; gap: 6px; padding-left: 2px; }
.info .sign + .caret { margin: 0 7px 0 8px; }
.vsep { width: 1px; height: 12px; margin: 0 5px 0 8px; background: #888; }
.winbtns { width: 112px; display: flex; align-items: flex-start; background: #f2ca6c; color: #222; padding-left: 20px; }
.winbtns button { width: 24px; height: 18px; display: flex; align-items: center; justify-content: center; }
.winbtns .x { width: 42px; margin-left: auto; background: #c75050; color: #fff; }

.tabs { display: grid; grid-template-columns: 47px 47px 65px 72px 43px 59px 54px 58px 43px 90px 59px 82px 84px 1fr; height: 20px; padding-left: 43px; background: #505050; border-bottom: 1px solid #3c3c3c; }
.tabs button { white-space: nowrap; line-height: 19px; }
.tabs .on { background: linear-gradient(#7c7c7c, #5e5e5e); border: 1px solid #999; border-bottom: 0; margin-top: 2px; line-height: 15px; height: 18px; color: #fff; }
.tabend { display: flex; align-items: center; gap: 6px; padding-left: 20px; }

.ribbon { display: flex; height: 93px; padding-left: 1px; background: linear-gradient(90deg, #5a5a5a, #3b3b3b); border-bottom: 2px solid #858585; color: #8c8c8c; }
.panel { display: flex; flex-direction: column; width: 210px; border-right: 1px solid #404040; background: #5c5c5c; }
.panel:nth-child(2) { width: 125px; }
.panel:nth-child(3) { width: 256px; }
.panel:nth-child(4) { width: 140px; }
.panel:nth-child(5) { width: 75px; }
.panel:nth-child(6) { width: 207px; }
.panel:nth-child(7) { width: 66px; }
.pbody { flex: 1; display: flex; padding-top: 3px; }
.ptitle { height: 19px; display: flex; align-items: center; justify-content: center; gap: 6px; color: #ececec; background: #4f4f4f; line-height: 19px; }
.bigb { display: flex; flex-direction: column; align-items: center; padding-top: 3px; }
.bigb span { color: #777; margin-top: 5px; line-height: 14px; }
.bigb .caret { margin-top: 2px; }
.bigb .caret, .minis .caret { border-top-color: #cfcfcf; }
.draw .bigb:nth-child(1) { width: 39px; }
.draw .bigb:nth-child(2) { width: 43px; }
.draw .bigb:nth-child(3) { width: 50px; }
.draw .bigb:nth-child(4) { width: 37px; }
.minis { display: grid; grid-auto-rows: 22px; align-items: center; justify-items: center; align-content: start; }
.two { grid-template-columns: 24px 9px; }
.mod { grid-template-columns: 28px 27px 29px 8px 31px; padding-left: 0; }
.one { grid-template-columns: 22px; }
.lays { grid-template-columns: repeat(5, 23px); padding-top: 1px; }
.lay { padding-left: 2px; gap: 2px; }
.sel { width: 55px; height: 68px; background: linear-gradient(#6584b3, #5c78a4); border: 1px solid #7fa2d4; padding-top: 2px; }
.sel span { margin-top: 17px; color: #4b6288; }
.combo { display: flex; align-items: center; gap: 6px; height: 21px; padding: 0 4px; background: #565656; border: 1px solid #3e3e3e; box-shadow: inset 0 1px #6a6a6a; }
.combo select { flex: 1; width: 0; color: #a5a5a5; }
.lay .combo { width: 194px; gap: 4px; }
.swatch { width: 12px; height: 12px; background: #ddd; border: 1px solid #333; margin: 0 2px; }
.lay .combo select { color: #888; }
.anno .bigb:nth-child(1) { width: 43px; }
.anno .bigb:nth-child(2) { width: 58px; }
.block .bigb { width: 38px; }
.props .bigb { width: 55px; flex: none; }
.pgrid { display: grid; grid-template-columns: 18px 1fr; grid-auto-rows: 22px; align-items: center; flex: 1; padding-left: 3px; }
.pgrid .combo select { color: #9d9d9d; }
.pgrid .combo { height: 21px; gap: 2px; padding: 0 4px 0 7px; }
.pgrid .dim select { color: #717171; padding-left: 14px; }
.dim .caret { border-top-color: #888; }
.black { width: 14px; height: 14px; margin-left: 4px; background: #262626; border: 1px solid #444; }
.ln { width: 56px; height: 2px; background: #ddd; }
.grp .bigb { width: 42px; }
.blue { width: 21px; height: 20px; display: flex; align-items: center; justify-content: center; background: #55749f; border: 1px solid #7da2d6; }
.single { width: 56px; margin-right: 1px; display: flex; flex-direction: column; align-items: center; padding: 5px 0 5px; background: linear-gradient(#666, #555); box-shadow: 1px 0 #3a3a3a; }
.single span { color: #797979; margin-top: 3px; }
.single .caret { margin-top: auto; }

.canvas { position: relative; flex: 1; min-height: 300px; background: #202631; border-right: 4px solid; border-image: linear-gradient(#d3e6f5 0 88px, #a9c4df 0) 0 4 0 0; }
.viewctl { padding: 7px 2px; color: #dcdcdc; }
.cross, .drawing, .vpbtns, .cube, .ucsname, .navbar, .palette, .dialog, .tip, .mouse { position: absolute; }
.cross { left: 368px; top: 0; }
.drawing { left: 440px; top: 228px; }
.vpbtns { right: 10px; top: 9px; display: flex; gap: 8px; color: #fff; }
.cube { right: 17px; top: 39px; width: 82px; height: 82px; border: 8px solid #454b55; border-radius: 50%; color: #b5bac2; }
.cube b { position: absolute; font: 700 13px/14px "Liberation Sans", sans-serif; }
.n { left: 28px; top: -11px; }
.s { left: 29px; bottom: -13px; }
.w { left: -12px; top: 26px; }
.e { right: -16px; top: 26px; }
.cube button { position: absolute; left: 15px; top: 15px; width: 36px; height: 36px; background: #a5a9ae; border: 5px solid #b4b7bb; color: #333a44; font: 700 10px/12px "Lato", sans-serif; }
.ucs { position: absolute; left: -1px; top: 35px; width: 47px; height: 45px; border: solid #c9ccd2; border-width: 0 0 2px 2px; }
.ucs span { position: absolute; font: 300 18px/18px "Open Sans", sans-serif; color: #d5d8dd; }
.uy { left: 2px; top: -24px; }
.ux { left: 51px; bottom: -2px; }
.ucsname { right: 27px; top: 139px; width: 64px; height: 16px; padding-left: 4px; border-radius: 4px; background: #8a9099; border: 1px solid #a2a7ae; color: #3f4650; font: 11px/14px "Liberation Sans", sans-serif; }
.navbar { right: 4px; top: 179px; width: 31px; height: 200px; padding: 4px 0; border-radius: 5px; background: #5a5f66; border: 1px solid #747a82; color: #3a3f46; display: flex; flex-direction: column; align-items: center; justify-content: space-between; }
.dot { width: 4px; height: 3px; background: #43484f; }

.palette { left: 64px; top: 42px; width: 420px; height: 325px; display: flex; background: #585858; border: 1px solid #6a6a6a; }
.strip { width: 24px; display: flex; flex-direction: column; align-items: center; padding: 2px 0 3px; gap: 6px; color: #cfcfcf; background: #5a5a5a; border-right: 1px solid #3c3c3c; }
.vname { margin: auto 0 4px; writing-mode: vertical-rl; transform: rotate(180deg); font-size: 13px; line-height: 18px; color: #b4b4b4; }
.pal { flex: 1; margin: 1px 0 2px; padding: 11px 0 0 5px; display: flex; flex-direction: column; background: #5b5b5b; }
.cur { color: #505050; line-height: 14px; }
.ptools { display: flex; align-items: center; gap: 7px; height: 26px; color: #bdbdbd; }
.psep { width: 1px; height: 16px; background: #888; }
.lt { display: flex; gap: 8px; margin-left: 47px; }
.split { display: flex; flex: 1; padding-top: 2px; }
.filters { width: 187px; display: flex; flex-direction: column; padding-left: 2px; }
.fh, .inv { display: flex; justify-content: space-between; padding-right: 8px; color: #282828; }
.fh { line-height: 19px; }
.fh svg, .inv svg { color: #d0d0d0; margin-top: 3px; }
.tree { padding: 4px 0 0 1px; color: #eee; }
.root { display: flex; align-items: center; gap: 7px; height: 16px; }
.minus { width: 9px; height: 9px; border: 3px solid #eee; border-width: 4px 2px; background: #333; }
.kid { display: flex; align-items: center; gap: 6px; height: 15px; margin-left: 33px; color: #eee; }
.kid svg { color: #999; width: 13px; }
mark { background: #f4f4f4; color: #666; padding: 0 1px; line-height: 14px; margin-left: -2px; }
.inv { margin-top: auto; padding-bottom: 15px; }
.inv label { display: flex; align-items: center; gap: 3px; line-height: 14px; }
.inv input { appearance: none; width: 13px; height: 13px; background: #eee; border: 1px solid #ccc; }
.layers { flex: 1; display: flex; flex-direction: column; }
table { border-collapse: collapse; table-layout: fixed; width: 100%; }
th, td { padding: 0; font-weight: 400; text-align: left; white-space: pre; overflow: hidden; }
.layers th { height: 20px; padding-left: 4px; background: #646464; border-right: 1px solid #4c4c4c; color: #ddd; }
.layers td { height: 17px; line-height: 17px; color: #e6e6e6; }
.layers td:nth-child(2) { padding-left: 3px; border-right: 1px solid #4a4a4a; }
.layers td:first-child { padding-left: 2px; }
.lampc svg { margin: auto; }
.layers .cur0 td { background: #8b8b8b; color: #222; }
.c1 { width: 23px; }
.c2 { width: 69px; }
.c3 { width: 80px; }
.srt { background-image: linear-gradient(135deg, transparent 50%, #9a9a9a 50%), linear-gradient(225deg, transparent 50%, #9a9a9a 50%) !important; background-size: 4px 4px !important; background-repeat: no-repeat !important; background-position: right 8px center, right 4px center !important; }
.lscroll { margin-top: auto; margin-bottom: 8px; height: 17px; padding: 3px; background: #f0eeef; color: #aaa; }
.foot { color: #4c4c4c; line-height: 14px; padding-bottom: 7px; margin-top: 2px; }

.dialog { left: 468px; top: -22px; width: 684px; padding: 0 7px 7px; background: #f2ca6c; color: #1e1e1e; font: 11px/14px "Lato", "Open Sans", sans-serif; }
.dtitle { display: flex; align-items: center; height: 28px; padding-left: 4px; }
.dtitle h2 { flex: 1; text-align: center; font: 13px/28px "Open Sans", sans-serif; color: #4b3b1a; padding-left: 2px; }
.dx { width: 29px; height: 18px; margin: 0 -1px 8px 0; display: flex; align-items: center; justify-content: center; background: #c94f4f; color: #fff; }
.client { padding: 6px 8px 6px 8px; background: #f1eff1; border: 1px solid #d8b769; }
.l1, .l2, .l3 { display: block; line-height: 15px; }
.l1 { padding-bottom: 1px; }
.l2 { line-height: 19px; }
.l3 { line-height: 24px; }
.client input { display: block; width: 247px; height: 19px; margin-left: -1px; padding: 0 1px; background: #fff; border: 1px solid #aaa; }
.box { border: 1px solid #444; border-top-width: 2px; background: #fefefe; display: flex; flex-direction: column; margin: 0 -1px; }
.def { height: 140px; }
.prev { height: 130px; }
.box th { height: 20px; line-height: 13px; padding-left: 6px; border-right: 1px solid #ccc; border-bottom: 1px solid #c4c4c4; }
.box th:last-child { padding-left: 4px; }
.box td { height: 15px; padding-left: 3px; line-height: 13px; }
.prev td { height: 17px; line-height: 15px; }
.box td.st { padding-left: 0; }
.a { width: 37px; } .b { width: 36px; } .ab { width: 73px; }
.c { width: 107px; } .d { width: 36px; } .e { width: 58px; } .f { width: 66px; } .g { width: 73px; }
.h { width: 60px; } .i { width: 64px; } .j { width: 51px; } .k { width: 51px; }
.def .rowh { border-right: 1px solid #999; background: #faf8fb; }
.lw i { display: inline-block; width: 21px; height: 3px; margin: 0 6px 3px -2px; background: #000; }
.box td.pick { padding-right: 1px; }
.pick button { display: block; width: 12px; height: 12px; margin-left: auto; border: 1px solid #74a5dc; background: #e4f0fc; color: #346; line-height: 4px; font-size: 9px; }
.box td.mid svg { margin: 0 auto; }
.col i { display: inline-block; width: 12px; height: 12px; margin: 0 4px -2px -1px; background: #1be31b; border: 1px solid #222; }
.grey { color: #777; }
.sb { margin-top: auto; height: 16px; display: flex; align-items: center; padding: 0 2px; gap: 4px; background: #f0eff0; color: #444; }
.thumb { flex: none; width: 540px; height: 13px; background: #cacaca; }
.sb svg:last-child { margin-left: auto; }
.off { color: #bbb; }
.btns { display: flex; justify-content: flex-end; gap: 9px; padding-top: 9px; margin-right: -2px; }
.btns button { width: 68px; height: 20px; background: linear-gradient(#f6f6f6, #e6e5e8); border: 1px solid #acacac; }
.tip { left: 754px; top: 141px; width: 342px; padding: 7px 7px 8px; background: #f4f3f5; border: 1px solid #8a8a8a; color: #6a6a6a; font: 11px/14px "Lato", sans-serif; }
.tip span { display: block; white-space: nowrap; }
.mouse { left: 743px; top: 121px; }

.cmd { display: flex; height: 49px; border-top: 2px solid #555; font: 11px/14px "DejaVu Sans Mono", monospace; }
.cleft { width: 21px; background: linear-gradient(#5a5a5a, #333); display: flex; flex-direction: column; align-items: center; gap: 9px; padding: 3px 2px 0 0; }
.grip { width: 16px; height: 5px; margin-bottom: -3px; background: repeating-linear-gradient(90deg, #aaa 0 1px, transparent 1px 3px); }
.cright { flex: 1; }
.hist { height: 27px; padding: 12px 0 0 2px; background: #c9c5c9; color: #222; border-bottom: 1px solid #999; }
.cin { display: flex; align-items: center; height: 20px; padding: 2px 0 0 5px; gap: 4px; background: #fff; }
.cin input { flex: 1; padding-left: 2px; font-style: italic; color: #333; outline: 0; }
.cin input::placeholder { color: #8c8c8c; opacity: 1; }
.layouts { display: flex; height: 21px; padding-left: 11px; background: #363636; }
.layouts button { width: 60px; height: 18px; line-height: 20px; color: #aaa; background: #4e4e4e; clip-path: polygon(0 0, 100% 0, 92% 80%, 86% 100%, 14% 100%, 8% 80%); }
.layouts .on { width: 54px; font-weight: 700; color: #fff; background: linear-gradient(#4e4e4e, #858585); }
.layouts .add { width: 22px; margin-left: 4px; font-size: 14px; line-height: 18px; color: #ccc; }
.status { display: flex; justify-content: flex-end; height: 26px; background: #383838; color: #e2e2e2; border-bottom: 1px solid #75604f; }
.seg { display: flex; align-items: center; justify-content: space-around; padding: 0 3px; background: #474747; border: 1px solid #6c6c6c; border-bottom: 0; border-right-width: 0; white-space: nowrap; color: #cfcfcf; }
.seg .caret { border-top-color: #f0f0f0; }
.coords { width: 198px; color: #eee; }
.model { width: 49px; color: #eee; }
.an { width: 138px; }
.gap { margin-left: 3px; }
.w38 { width: 38px; }
.w25 { width: 25px; }
.w24 { width: 24px; }
.eng { width: 102px; }
.last { width: 46px; }
</style>
